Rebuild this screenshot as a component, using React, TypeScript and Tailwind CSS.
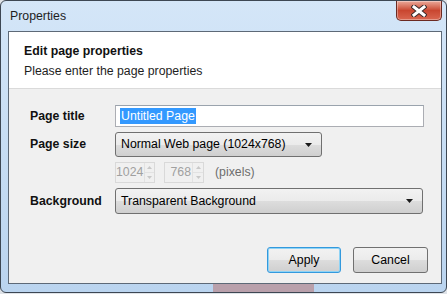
import React from "react";

function CloseButton() {
  return (
    <div className="w-[46px] h-[20px] rounded-b-[5px] border border-t-0 border-[#6b2a22] bg-gradient-to-b from-[#eaa99a] via-[#c94630] to-[#d96650] flex items-center justify-center shadow-[inset_0_0_0_1px_rgba(255,255,255,0.35)]">
      <svg width="16" height="12" viewBox="0 0 16 12">
        <path d="M3 2 L13 10 M13 2 L3 10" stroke="#3b2b2b" strokeWidth="5" strokeLinecap="square" />
        <path d="M3 2 L13 10 M13 2 L3 10" stroke="#ffffff" strokeWidth="3" strokeLinecap="square" />
      </svg>
    </div>
  );
}

function Arrow() {
  return (
    <svg width="7" height="4" viewBox="0 0 7 4" className="shrink-0">
      <polygon points="0,0 7,0 3.5,4" fill="#1a1a1a" />
    </svg>
  );
}

function Select({ value, className }: { value: string; className: string }) {
  return (
    <div
      className={`${className} rounded-[3px] border border-[#707070] bg-[linear-gradient(#f2f2f2,#ebebeb_50%,#dddddd_50%,#cfcfcf)] flex items-center pl-[5px] pr-[9px] text-[#000]`}
    >
      <span className="flex-1 whitespace-nowrap">{value}</span>
      <Arrow />
    </div>
  );
}

function Spinner({ value }: { value: string }) {
  return (
    <div className="w-[40px] h-[21px] border border-[#d9d9d9] bg-[#f0f0f0] flex">
      <span className="flex-1 text-right pr-[1px] text-[#a0a0a0] leading-[19px]">{value}</span>
      <div className="w-[11px] flex flex-col border-l border-[#e2e2e2]">
        <div className="flex-1 flex items-center justify-center border-b border-[#e2e2e2]">
          <svg width="5" height="3" viewBox="0 0 5 3">
            <polygon points="0,3 5,3 2.5,0" fill="#c8c8c8" />
          </svg>
        </div>
        <div className="flex-1 flex items-center justify-center">
          <svg width="5" height="3" viewBox="0 0 5 3">
            <polygon points="0,0 5,0 2.5,3" fill="#c8c8c8" />
          </svg>
        </div>
      </div>
    </div>
  );
}

export default function App() {
  return (
    <div className="w-[447px] h-[294px] bg-[#dfe3e8] overflow-hidden font-['Liberation_Sans',Arial,sans-serif] text-[12.3px] text-[#1e1e1e]">
      <div className="w-[447px] h-[293px] rounded-[6px] border border-[#3d4753] bg-gradient-to-b from-[#d4e6f8] to-[#bad4ef] flex flex-col overflow-hidden">
        {/* title bar */}
        <div className="h-[30px] flex items-start justify-between pl-[9px] pr-[4px]">
          <span className="mt-[8px] leading-[14px] text-[#1e1e1e]">Properties</span>
          <CloseButton />
        </div>

        {/* client */}
        <div className="ml-[7px] mr-[4px] h-[253px] border border-[#5d6977] bg-[#f0f0f0] flex flex-col">
          <div className="h-[57px] bg-white border-b border-[#dadada] pl-[15px] pt-[9px] leading-[20px]">
            <div className="font-bold text-[#111]">Edit page properties</div>
            <div className="text-[#1e1e1e]">Please enter the page properties</div>
          </div>

          <div className="flex-1 flex flex-col pt-[16px] pl-[21px] pr-[17px]">
            <div className="flex items-center">
              <span className="w-[85px] font-bold text-[#111]">Page title</span>
              <div className="flex-1 h-[22px] border border-[#abadb3] border-t-[#9aa3ad] bg-white flex items-center pl-[4px]">
                <span className="bg-[#3399ff] text-white leading-[16px] px-[1px]">Untitled Page</span>
              </div>
            </div>

            <div className="flex items-center mt-[5px]">
              <span className="w-[85px] font-bold text-[#111]">Page size</span>
              <Select value="Normal Web page (1024x768)" className="w-[207px] h-[25px]" />
            </div>

            <div className="flex items-center mt-[5px] pl-[85px] gap-[9px]">
              <Spinner value="1024" />
              <Spinner value="768" />
              <span className="ml-[2px] text-[#6d6d6d]">(pixels)</span>
            </div>

            <div className="flex items-center mt-[5px]">
              <span className="w-[85px] font-bold text-[#111]">Background</span>
              <Select value="Transparent Background" className="flex-1 h-[26px] mr-[1px]" />
            </div>

            <div className="mt-auto pb-[10px] flex justify-end gap-[12px] mr-[-4px]">
              <div className="w-[74px] h-[26px] rounded-[3px] border border-[#3399dd] shadow-[inset_0_0_0_1px_#8fd3f5] bg-[linear-gradient(#f2f2f2,#ebebeb_50%,#dddddd_50%,#cfcfcf)] flex items-center justify-center text-[#000]">
                Apply
              </div>
              <div className="w-[75px] h-[26px] rounded-[3px] border border-[#707070] bg-[linear-gradient(#f2f2f2,#ebebeb_50%,#dddddd_50%,#cfcfcf)] flex items-center justify-center text-[#000]">
                Cancel
              </div>
            </div>
          </div>
        </div>

        <div className="flex-1 flex">
          <div className="w-[212px]" />
          <div className="w-[101px] bg-[#b9a0ab]" />
          <div className="flex-1" />
        </div>
      </div>
    </div>
  );
}
